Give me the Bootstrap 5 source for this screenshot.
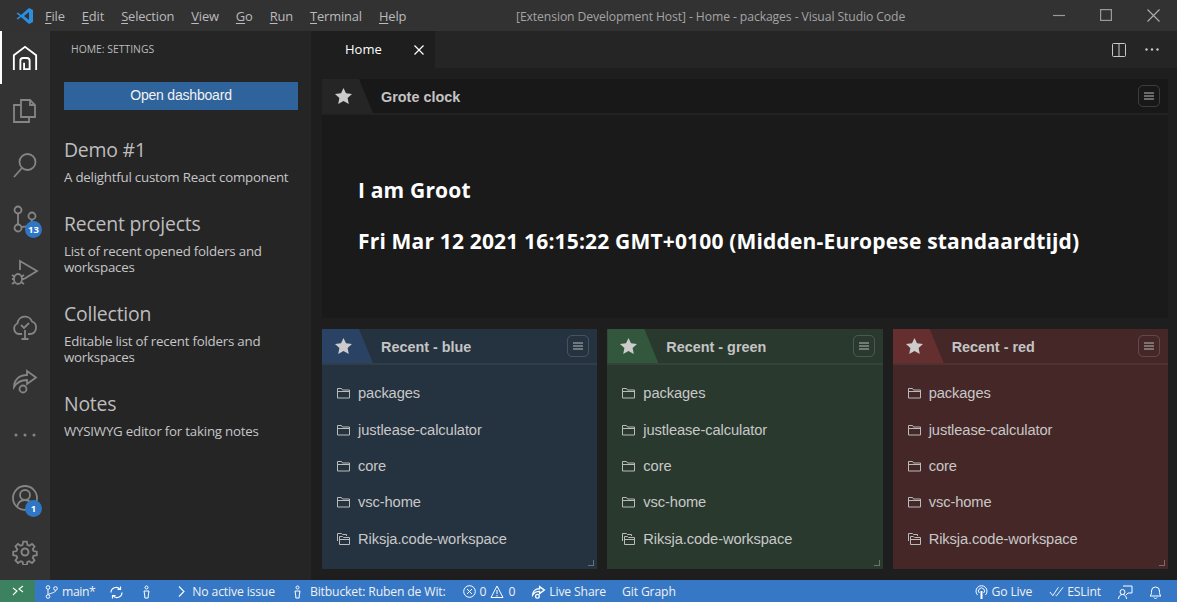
<!DOCTYPE html>
<html lang="en">
<head>
<meta charset="UTF-8">
<title>Home - packages - Visual Studio Code</title>
<link href="https://cdn.jsdelivr.net/npm/bootstrap@5.3.3/dist/css/bootstrap.min.css" rel="stylesheet">
<style>
html,body{height:100%;overflow:hidden}
body{background:#1e1e1e;color:#ccc;font-family:"Open Sans","Noto Sans",sans-serif;font-size:13px}
svg{display:block;flex:none}
.app-shell{width:1177px;height:602px}
.main-area{min-height:0}
.title-bar{height:31px;background:#323233;flex:none}
.vs-logo{width:45px;flex:none}
.menu-row{padding-top:2px}
.menu-item{font-size:12.9px;margin-right:17px;color:#bbb;letter-spacing:-.15px}
.menu-item u{text-underline-offset:2px}
.win-title{left:516px;top:8px;font-size:12.2px;color:#a4a4a4;letter-spacing:-.1px}
.win-btns{width:142px;margin-left:auto}
.win-btn{width:47.5px}
.activity-bar{width:50px;background:#333;flex:none;padding-bottom:1px}
.act-item{height:54px;width:50px}
.act-item.on{height:53px;border-left:2px solid #fff;padding-right:2px}
.act-badge{right:8px;bottom:8px;min-width:17px;height:17px;border-radius:9px;background:#2f76c5;color:#fff;font-size:9.5px;font-weight:700;line-height:17px;text-align:center}
.side-panel{width:261px;background:#252526;flex:none;padding:0 14px}
.side-title{font-size:10.4px;margin:11px 0 0 7px;height:14px;line-height:14px;color:#bbb}
.open-btn{margin-top:26px;height:28px;width:234px;background:#2e639c;color:#f2f2f2;font:14px/26px "Liberation Sans",sans-serif;text-align:center;letter-spacing:-.2px}
.side-head{font-size:19.4px;line-height:26px;color:#bdbdbd;letter-spacing:-.2px}
.side-text{font-size:13.3px;line-height:16px;color:#c6c6c6;letter-spacing:-.22px;margin-top:6px}
.side-block{height:74px}
.side-block.first{margin-top:27px}
.side-block.tall{height:90px}
.side-block.tall + .side-block{height:90px}
.editor-wrap{background:#1e1e1e;min-width:0}
.tab-strip{height:37px;background:#252526;flex:none}
.tab-one{width:124px;height:37px;background:#1e1e1e;font-size:13px;padding:1px 0 0 34px;color:#fff}
.tab-x{margin-left:auto;margin-right:11px}
.tab-tools{margin-left:auto;gap:19px;padding-right:18px}
.dash-grid{padding:11px 9px 0 11px;gap:11px 10px;display:grid;grid-template-columns:repeat(3,1fr);grid-template-rows:239px 240px}
.dash-card{min-width:0}
.dash-card.wide{grid-column:1 / 4;background:#1a1a1a}
.dash-card.blue{background:#25323f}
.dash-card.green{background:#29392e}
.dash-card.red{background:#452727}
.card-top{height:36px;border-bottom:2px solid rgba(255,255,255,.06);font:700 14.4px "Liberation Sans",sans-serif;color:#c4c4c4}
.wide .card-top{background:#181818;border-bottom-color:#222}
.star-tab{width:51px;height:34px;clip-path:polygon(0 0,37px 0,51px 100%,0 100%);padding-left:13px}
.wide .star-tab{background:#252525}
.blue .star-tab{background:#2a4263}
.green .star-tab{background:#32573d}
.red .star-tab{background:#652f2f}
.card-name{margin-left:8px;padding-top:1px}
.menu-box{width:22px;height:22px;border:1px solid rgba(255,255,255,.16);border-radius:5px;margin-left:auto;margin-right:8px}
.clock-text{padding:62px 0 0 36px;color:#fff;font-size:21px;font-weight:700;line-height:27px;letter-spacing:.17px}
.clock-text p{margin:0 0 24px}
.recent-list{padding:10px 0 0 15px;font:14.7px "Liberation Sans",sans-serif;color:#c8c8c8;letter-spacing:-.1px}
.recent-row{height:36.4px;gap:4px}
.resize-mark{right:3px;bottom:3px;width:6px;height:6px;border-right:1px solid rgba(255,255,255,.3);border-bottom:1px solid rgba(255,255,255,.3)}
.status-bar{height:22px;background:#3678c6;color:#f0f0f0;font-size:12.2px;flex:none;letter-spacing:-.15px;padding-top:2px}
.remote-box{width:35px;height:22px;background:#3c8160;margin-top:-2px}
.stat-item{gap:4px;white-space:nowrap}
.st-branch{margin-left:10px;letter-spacing:-.4px}
.st-sync{margin-left:14px}
.st-person{margin-left:18px}
.st-issue{margin-left:27px}
.st-issue svg{margin-right:3px}
.st-bit{margin-left:18px;gap:8px}
.st-probs{margin-left:17px;gap:4px}
.st-live{margin-left:16px;gap:3px}
.st-graph{margin-left:16px}
.st-right{padding-right:15px}
.st-lint{margin-left:17px;gap:3px}
.st-feedback{margin-left:17px}
.st-bell{margin-left:16px}
</style>
</head>
<body>
<div class="app-shell d-flex flex-column position-relative">
  <div class="title-bar d-flex align-items-center">
    <div class="vs-logo d-flex justify-content-center ps-1">
      <svg width="18" height="18" viewBox="0 0 18 18"><path d="M13 1 17 3V15L13 17 5 10 2 12.500 .5 11.500 4 9 .5 6.500 2 5.500 5 8Z" fill="#2b8fe0"/><path d="M13 5 8 9 13 13Z" fill="#323233"/></svg>
    </div>
    <div class="menu-row d-flex">
      <span class="menu-item"><u>F</u>ile</span>
      <span class="menu-item"><u>E</u>dit</span>
      <span class="menu-item"><u>S</u>election</span>
      <span class="menu-item"><u>V</u>iew</span>
      <span class="menu-item"><u>G</u>o</span>
      <span class="menu-item"><u>R</u>un</span>
      <span class="menu-item"><u>T</u>erminal</span>
      <span class="menu-item"><u>H</u>elp</span>
    </div>
    <span class="win-title position-absolute">[Extension Development Host] - Home - packages - Visual Studio Code</span>
    <div class="win-btns d-flex">
      <div class="win-btn d-flex justify-content-center"><svg width="12" height="12"><path d="M0 6.500H12" stroke="#999" stroke-width="1.200"/></svg></div>
      <div class="win-btn d-flex justify-content-center"><svg width="12" height="12"><rect x=".6" y=".6" width="10.800" height="10.800" fill="none" stroke="#999" stroke-width="1.200"/></svg></div>
      <div class="win-btn d-flex justify-content-center"><svg width="13" height="13"><path d="M.5.5 12.500 12.500M12.500.5.5 12.500" stroke="#aaa" stroke-width="1.200"/></svg></div>
    </div>
  </div>

  <div class="main-area d-flex flex-grow-1">
    <div class="activity-bar d-flex flex-column">
      <div class="act-item on d-flex align-items-center justify-content-center">
        <svg width="26" height="26" viewBox="0 0 28 28" fill="none" stroke="#fff" stroke-width="2"><path d="M2 27V11L14 2 26 11V27"/><path d="M9 27V17a3 3 0 0 1 3-3h4a3 3 0 0 1 3 3v9h-6v-7"/></svg>
      </div>
      <div class="act-item d-flex align-items-center justify-content-center">
        <svg width="26" height="26" viewBox="0 0 26 26" fill="none" stroke="#858585" stroke-width="1.800"><path d="M9 19V2h9l5 5v12Z"/><path d="M18 2v5h5"/><path d="M9 7H2v17h15v-5"/></svg>
      </div>
      <div class="act-item d-flex align-items-center justify-content-center">
        <svg width="26" height="26" viewBox="0 0 26 26" fill="none" stroke="#858585" stroke-width="1.800"><circle cx="15.500" cy="10" r="8"/><path d="M10 16 2 25"/></svg>
      </div>
      <div class="act-item position-relative d-flex align-items-center justify-content-center">
        <svg width="26" height="28" viewBox="0 0 26 28" fill="none" stroke="#858585" stroke-width="1.800"><circle cx="6" cy="5" r="3.500"/><circle cx="6" cy="23" r="3.500"/><circle cx="20" cy="11" r="3.500"/><path d="M6 8.500V19.500M9.500 22C15 22 20 20 20 14.500"/></svg>
        <span class="act-badge position-absolute">13</span>
      </div>
      <div class="act-item d-flex align-items-center justify-content-center">
        <svg width="28" height="28" viewBox="0 0 28 28" fill="none" stroke="#858585" stroke-width="1.800"><path d="M9 11V2L26 12 13 20"/><ellipse cx="7" cy="20" rx="4" ry="5"/><path d="M1 16l3 2M13 16l-3 2M1 20h2M13 20h-2M1 25l3-2M13 25l-3-2"/></svg>
      </div>
      <div class="act-item d-flex align-items-center justify-content-center">
        <svg width="26" height="26" viewBox="0 0 26 26" fill="none" stroke="#858585" stroke-width="1.800"><path d="M10 20H7a5.500 5.500 0 0 1-1.500-10.500A7.500 7.500 0 0 1 20 7.500 6.500 6.500 0 0 1 18 20H16"/><path d="M13 16V25M9.500 25H16.500M9 11l3 3 5-5"/></svg>
      </div>
      <div class="act-item d-flex align-items-center justify-content-center">
        <svg width="26" height="26" viewBox="0 0 26 26" fill="none" stroke="#858585" stroke-width="1.800"><path d="M15 3 24 9.500 15 16V12C9 12 5 14 2 19 2 12 7 7 15 7Z"/><circle cx="11" cy="21" r="3.500"/></svg>
      </div>
      <div class="act-item d-flex align-items-center justify-content-center">
        <svg width="22" height="4"><circle cx="2" cy="2" r="1.500" fill="#858585"/><circle cx="11" cy="2" r="1.500" fill="#858585"/><circle cx="20" cy="2" r="1.500" fill="#858585"/></svg>
      </div>
      <div class="mt-auto act-item position-relative d-flex align-items-center justify-content-center">
        <svg width="26" height="26" viewBox="0 0 26 26" fill="none" stroke="#858585" stroke-width="1.800"><circle cx="13" cy="13" r="12"/><circle cx="13" cy="10" r="5"/><path d="M5 22c1-5 4-7 8-7s7 2 8 7"/></svg>
        <span class="act-badge position-absolute">1</span>
      </div>
      <div class="act-item d-flex align-items-center justify-content-center">
        <svg width="26" height="26" viewBox="0 0 26 26" fill="none" stroke="#858585" stroke-width="2"><circle cx="13" cy="13" r="3.500"/><path d="M11 1.500h4l.7 3.600 2 .9 3.100-2 2.800 2.800-2 3.100.9 2 3.600.7v4l-3.600.7-.9 2 2 3.100-2.800 2.800-3.100-2-2 .9-.7 3.300h-4l-.7-3.300-2-.9-3.100 2-2.800-2.800 2-3.100-.9-2-3.600-.7v-4l3.600-.7.9-2-2-3.100 2.800-2.800 3.100 2 2-.9Z" transform="translate(1.300 1.300) scale(.9)"/></svg>
      </div>
    </div>

    <div class="side-panel">
      <div class="side-title">HOME: SETTINGS</div>
      <div class="open-btn">Open dashboard</div>
      <div class="side-block first">
        <div class="side-head">Demo #1</div>
        <div class="side-text">A delightful custom React component</div>
      </div>
      <div class="side-block tall">
        <div class="side-head">Recent projects</div>
        <div class="side-text">List of recent opened folders and workspaces</div>
      </div>
      <div class="side-block">
        <div class="side-head">Collection</div>
        <div class="side-text">Editable list of recent folders and workspaces</div>
      </div>
      <div class="side-block">
        <div class="side-head">Notes</div>
        <div class="side-text">WYSIWYG editor for taking notes</div>
      </div>
    </div>

    <div class="editor-wrap flex-grow-1 d-flex flex-column">
      <div class="tab-strip d-flex">
        <div class="tab-one d-flex align-items-center">Home
          <svg class="tab-x" width="10" height="10"><path d="M.5.5 9.500 9.500M9.500.5.5 9.500" stroke="#fff" stroke-width="1.200"/></svg>
        </div>
        <div class="tab-tools d-flex align-items-center">
          <svg width="14" height="14"><rect x=".5" y=".5" width="13" height="13" rx="1" fill="none" stroke="#c8c8c8"/><path d="M7 0V14" stroke="#c8c8c8"/></svg>
          <svg width="14" height="3"><circle cx="1.500" cy="1.500" r="1.200" fill="#c8c8c8"/><circle cx="7" cy="1.500" r="1.200" fill="#c8c8c8"/><circle cx="12.500" cy="1.500" r="1.200" fill="#c8c8c8"/></svg>
        </div>
      </div>
      <div class="dash-grid flex-grow-1" id="dashGrid">
        <div class="dash-card wide">
          <div class="card-top d-flex align-items-center">
            <div class="star-tab d-flex align-items-center"><svg width="17" height="16" viewBox="0 0 17 16"><path d="M8.500 0 11 5.300 17 6.100 12.600 10.100 13.800 16 8.500 13.100 3.200 16 4.400 10.100 0 6.100 6 5.300Z" fill="#ccc"/></svg></div>
            <span class="card-name">Grote clock</span>
            <div class="menu-box d-flex align-items-center justify-content-center"><svg width="10" height="8"><path d="M0 1H10M0 4H10M0 7H10" stroke="#bbb"/></svg></div>
          </div>
          <div class="clock-text">
            <p>I am Groot</p>
            <p>Fri Mar 12 2021 16:15:22 GMT+0100 (Midden-Europese standaardtijd)</p>
          </div>
        </div>
      </div>
    </div>
  </div>

  <div class="status-bar d-flex align-items-center">
    <div class="remote-box d-flex align-items-center justify-content-center"><svg width="12" height="12" viewBox="0 0 12 12" fill="none" stroke="#fff" stroke-width="1.100"><path d="M1 10 5 6 1 3M11 1 7 4 11 7"/></svg></div>
    <div class="stat-item st-branch d-flex align-items-center">
      <svg width="13" height="14" viewBox="0 0 13 14" fill="none" stroke="#fff"><circle cx="3" cy="2.500" r="1.800"/><circle cx="3" cy="11.500" r="1.800"/><circle cx="10.500" cy="3.500" r="1.800"/><path d="M3 4.500V9.500M10.500 5.500C10.500 8 5 8 3.500 9.500"/></svg>main*
    </div>
    <svg class="st-sync" width="15" height="13" viewBox="0 0 15 13" fill="none" stroke="#fff" stroke-width="1.200"><path d="M2 6.500a5 5 0 0 1 9-3M13 6.500a5 5 0 0 1-9 3M11.500.5v3h-3M3.500 12.500v-3h3"/></svg>
    <svg class="st-person" width="9" height="14" viewBox="0 0 9 14" fill="none" stroke="#fff"><circle cx="4.500" cy="2.500" r="1.500"/><path d="M2 6h5l-.8 5v2H2.800v-2Z"/></svg>
    <div class="stat-item st-issue d-flex align-items-center">
      <svg width="7" height="11" viewBox="0 0 7 11" fill="none" stroke="#fff" stroke-width="1.100"><path d="M1 .5 6 5.500 1 10.500"/></svg>No active issue
    </div>
    <div class="stat-item st-bit d-flex align-items-center">
      <svg width="9" height="14" viewBox="0 0 9 14" fill="none" stroke="#fff"><circle cx="4.500" cy="2.500" r="1.500"/><path d="M2 6h5l-.8 5v2H2.800v-2Z"/></svg>Bitbucket: Ruben de Wit:
    </div>
    <div class="stat-item st-probs d-flex align-items-center">
      <svg width="13" height="13" viewBox="0 0 13 13" fill="none" stroke="#fff"><circle cx="6.500" cy="6.500" r="5.800"/><path d="M4 4 9 9M9 4 4 9"/></svg>0
      <svg width="14" height="13" viewBox="0 0 14 13" fill="none" stroke="#fff"><path d="M7 1 13 12.500H1Z"/><path d="M7 5V9M7 10V11.500"/></svg>0
    </div>
    <div class="stat-item st-live d-flex align-items-center">
      <svg width="15" height="14" viewBox="0 0 26 26" fill="none" stroke="#fff" stroke-width="2.400"><path d="M15 3 24 9.500 15 16V12C9 12 5 14 2 19 2 12 7 7 15 7Z"/><circle cx="11" cy="21" r="3.500"/></svg>Live Share
    </div>
    <div class="stat-item st-graph">Git Graph</div>
    <div class="st-right ms-auto d-flex align-items-center">
      <div class="stat-item d-flex align-items-center">
        <svg width="13" height="14" viewBox="0 0 13 14" fill="none" stroke="#fff"><path d="M2.500 10a5.500 5.500 0 1 1 8 0M4.300 8a3 3 0 1 1 4.400 0"/><path d="M6.500 6V14" stroke-width="2"/></svg>Go Live
      </div>
      <div class="stat-item st-lint d-flex align-items-center">
        <svg width="15" height="11" viewBox="0 0 16 11" fill="none" stroke="#fff"><path d="M1 6l3 4L10 1M7 9.500l1 .5 7-9"/></svg>ESLint
      </div>
      <svg class="st-feedback" width="15" height="14" viewBox="0 0 15 14" fill="none" stroke="#fff"><path d="M5 1H14V8H10L8 10"/><circle cx="4.500" cy="7" r="2.500"/><path d="M.5 14c0-3 2-4.500 4-4.500S8.500 11 8.500 14"/></svg>
      <svg class="st-bell" width="13" height="14" viewBox="0 0 13 14" fill="none" stroke="#fff"><path d="M1 11c1.500-1 1.500-3 1.500-5a4 4 0 0 1 8 0c0 2 0 4 1.500 5ZM5 12.500a1.600 1.600 0 0 0 3 0"/></svg>
    </div>
  </div>
</div>

<script>
// the three recent cards share the same rows
var recent = ["packages", "justlease-calculator", "core", "vsc-home", "Riksja.code-workspace"];
var folderIcon = '<svg width="13" height="12" viewBox="0 0 13 12" fill="none" stroke="#bbb"><path d="M.5 1.500h4l1 1.500h7v8H.5ZM.5 4.500h12"/></svg>';
var workspaceIcon = '<svg width="13" height="12" viewBox="0 0 13 12" fill="none" stroke="#bbb"><path d="M.5 8V.5h4l1 1h4v1.500M2.500 11.500V3.500h3l1 1h6v7ZM2.500 6.500h10"/></svg>';
var grid = document.getElementById("dashGrid");
[["blue", "Recent - blue"], ["green", "Recent - green"], ["red", "Recent - red"]].forEach(function (c) {
  var rows = recent.map(function (name, i) {
    return '<div class="recent-row d-flex align-items-center">' + (i === 4 ? workspaceIcon : folderIcon) + '<span class="ms-1">' + name + '</span></div>';
  }).join("");
  grid.insertAdjacentHTML("beforeend",
    '<div class="dash-card position-relative ' + c[0] + '">' +
    '<div class="card-top d-flex align-items-center"><div class="star-tab d-flex align-items-center"><svg width="17" height="16" viewBox="0 0 17 16"><path d="M8.500 0 11 5.300 17 6.100 12.600 10.100 13.800 16 8.500 13.100 3.200 16 4.400 10.100 0 6.100 6 5.300Z" fill="#ccc"/></svg></div>' +
    '<span class="card-name">' + c[1] + '</span><div class="menu-box d-flex align-items-center justify-content-center"><svg width="10" height="8"><path d="M0 1H10M0 4H10M0 7H10" stroke="#bbb"/></svg></div></div>' +
    '<div class="recent-list">' + rows + '</div><div class="resize-mark position-absolute"></div></div>');
});
</script>
<script src="https://cdn.jsdelivr.net/npm/bootstrap@5.3.3/dist/js/bootstrap.bundle.min.js"></script>
</body>
</html>
